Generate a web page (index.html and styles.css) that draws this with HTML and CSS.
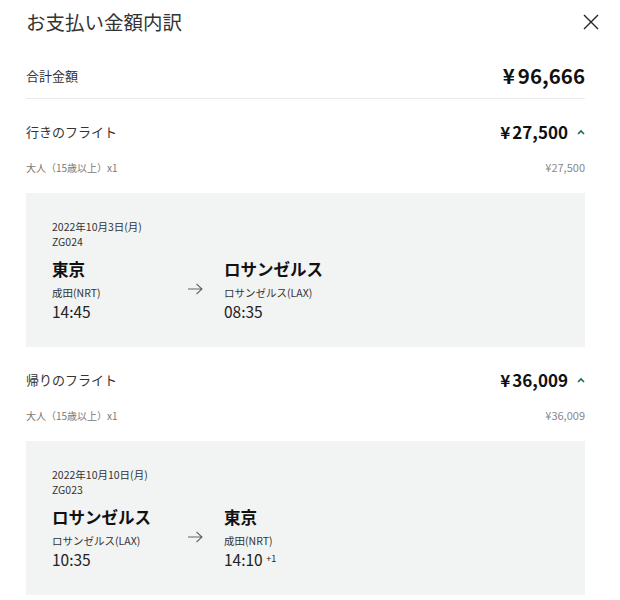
FILE: index.html
```html
<!DOCTYPE html>
<html lang="ja">
<head>
<meta charset="utf-8">
<title>お支払い金額内訳</title>
<link rel="stylesheet" href="styles.css">
</head>
<body>
<div class="sheet">
  <div class="header">
    <h1 class="title">お支払い金額内訳</h1>
    <button class="close" aria-label="閉じる">
      <svg width="16" height="16" viewBox="0 0 16 16"><path d="M1 1 L15 15 M15 1 L1 15" stroke="#222" stroke-width="1.4" fill="none"/></svg>
    </button>
  </div>

  <div class="total">
    <span class="total-label">合計金額</span>
    <span class="total-price"><span class="yen">¥</span>96,666</span>
  </div>

  <section class="leg">
    <div class="leg-head">
      <span class="leg-title">行きのフライト</span>
      <span class="leg-price"><span><span class="yen">¥</span>27,500</span>
        <svg class="chev" width="8" height="6" viewBox="0 0 8 6"><path d="M1 5 L4 2 L7 5" stroke="#1d6b4b" stroke-width="1.6" fill="none"/></svg>
      </span>
    </div>
    <div class="pax">
      <span class="pax-label">大人（15歳以上）x1</span>
      <span class="pax-price">¥27,500</span>
    </div>
    <div class="card">
      <div class="date">2022年10月3日(月)</div>
      <div class="flight-no">ZG024</div>
      <div class="route">
        <div class="stop">
          <div class="city">東京</div>
          <div class="airport">成田(NRT)</div>
          <div class="time">14:45</div>
        </div>
        <div class="arrow">
          <svg width="16" height="12" viewBox="0 0 16 12"><path d="M1 6 H15 M9.5 1 L15 6 L9.5 11" stroke="#666" stroke-width="1.1" fill="none"/></svg>
        </div>
        <div class="stop">
          <div class="city">ロサンゼルス</div>
          <div class="airport">ロサンゼルス(LAX)</div>
          <div class="time">08:35</div>
        </div>
      </div>
    </div>
  </section>

  <section class="leg">
    <div class="leg-head">
      <span class="leg-title">帰りのフライト</span>
      <span class="leg-price"><span><span class="yen">¥</span>36,009</span>
        <svg class="chev" width="8" height="6" viewBox="0 0 8 6"><path d="M1 5 L4 2 L7 5" stroke="#1d6b4b" stroke-width="1.6" fill="none"/></svg>
      </span>
    </div>
    <div class="pax">
      <span class="pax-label">大人（15歳以上）x1</span>
      <span class="pax-price">¥36,009</span>
    </div>
    <div class="card">
      <div class="date">2022年10月10日(月)</div>
      <div class="flight-no">ZG023</div>
      <div class="route">
        <div class="stop">
          <div class="city">ロサンゼルス</div>
          <div class="airport">ロサンゼルス(LAX)</div>
          <div class="time">10:35</div>
        </div>
        <div class="arrow">
          <svg width="16" height="12" viewBox="0 0 16 12"><path d="M1 6 H15 M9.5 1 L15 6 L9.5 11" stroke="#666" stroke-width="1.1" fill="none"/></svg>
        </div>
        <div class="stop">
          <div class="city">東京</div>
          <div class="airport">成田(NRT)</div>
          <div class="time">14:10 <sup class="plus">+1</sup></div>
        </div>
      </div>
    </div>
  </section>
</div>
</body>
</html>
```
FILE: styles.css
```css
* { box-sizing: border-box; }
html, body { margin: 0; padding: 0; background: #fff; }
body {
  font-family: "Noto Sans CJK JP", "Noto Sans", sans-serif;
  color: #222;
  overflow: hidden;
}
.sheet {
  padding: 8px 35px 0 26px;
}
.header {
  display: flex;
  justify-content: space-between;
  align-items: center;
  margin-right: -14px;
  height: 28px;
}
.title {
  margin: 0;
  font-size: 19.5px;
  font-weight: 400;
  line-height: 28px;
  color: #333;
}
.close {
  border: 0;
  background: none;
  padding: 0;
  width: 16px;
  height: 16px;
  display: flex;
}
.total {
  display: flex;
  justify-content: space-between;
  align-items: center;
  padding-top: 20px;
  height: 63px;
  padding-bottom: 4px;
  border-bottom: 1px solid #e6ebeb;
}
.total-label { font-size: 13px; color: #333; }
.total-price { font-size: 20.5px; font-weight: 700; color: #111; }
.yen { margin-right: 3px; }
.leg { padding-top: 20px; }
.leg-head {
  display: flex;
  justify-content: space-between;
  align-items: center;
  height: 24px;
}
.leg-title { font-size: 13px; color: #333; }
.leg-price {
  font-size: 17px;
  font-weight: 700;
  color: #111;
  display: flex;
  align-items: center;
  gap: 9px;
}
.leg-price .yen { margin-right: 2px; }
.chev { margin-top: 1px; }
.pax {
  display: flex;
  justify-content: space-between;
  align-items: center;
  margin-top: 12px;
  height: 24px;
  color: #777;
}
.pax-label { font-size: 10px; }
.pax-price { font-size: 11px; color: #888; }
.card {
  margin-top: 14px;
  background: #f2f3f3;
  height: 154px;
  padding: 26px 26px 0 26px;
}
.date, .flight-no {
  font-size: 10.5px;
  line-height: 15px;
  color: #333;
}
.route {
  display: flex;
  margin-top: 8px;
}
.stop { display: flex; flex-direction: column; }
.route > .stop:first-child { width: 135px; }
.arrow { width: 37px; padding-top: 19px; }
.city {
  font-size: 16.5px;
  font-weight: 700;
  line-height: 24px;
  color: #111;
}
.airport {
  margin-top: 4px;
  font-size: 10.5px;
  line-height: 16px;
  color: #333;
}
.time {
  margin-top: 2px;
  font-size: 15.5px;
  line-height: 17px;
  color: #222;
}
.plus {
  font-size: 9px;
  vertical-align: 4px;
  line-height: 0;
}
```
